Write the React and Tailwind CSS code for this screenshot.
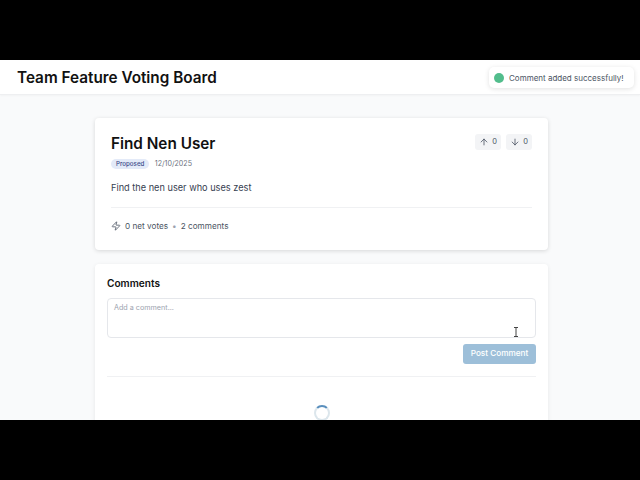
import { ArrowUp, ArrowDown, Zap } from 'lucide-react';

function VoteButton({ icon: Icon }) {
  return (
    <div className="flex h-[16px] w-[26px] items-center justify-center gap-[3px] rounded-[3px] bg-[#f3f4f6] text-[7.5px] text-[#4b5563]">
      <Icon size={10} strokeWidth={1.75} className="text-[#374151]" />
      <span>0</span>
    </div>
  );
}

export default function App() {
  return (
    <div className="flex h-[480px] w-[640px] flex-col overflow-hidden bg-black font-['Inter',sans-serif]">
      <div className="h-[60px] shrink-0" />
      <div className="relative h-[360px] shrink-0 overflow-hidden bg-[#f9fafb]">
        <header className="flex h-[35px] items-center border-b border-[#eeeff1] bg-white pt-[1px] pl-[17px] shadow-[0_1px_2px_rgba(0,0,0,0.03)]">
          <h1 className="text-[15.3px] leading-none font-semibold text-[#111111]">Team Feature Voting Board</h1>
        </header>

        <div className="absolute top-[7px] right-[6px] flex h-[21px] w-[145px] items-center gap-[5px] rounded-[5px] bg-white pl-[5px] shadow-[0_1px_5px_rgba(0,0,0,0.12)]">
          <span className="h-[10px] w-[10px] rounded-full bg-[#52bd8c]" />
          <span className="text-[8px] text-[#4b5563]">Comment added successfully!</span>
        </div>

        <main className="ml-[95px] flex w-[453px] flex-col gap-[14px] pt-[23px]">
          <section className="rounded-[4px] bg-white px-[16px] pt-[16px] pb-[18px] shadow-[0_1px_4px_rgba(0,0,0,0.14)]">
            <div className="flex items-start justify-between">
              <div>
                <h2 className="text-[15.3px] leading-[19px] font-semibold text-[#111111]">Find Nen User</h2>
                <div className="mt-[6px] flex items-center gap-[5.5px]">
                  <span className="rounded-full bg-[#e3eaf8] px-[5px] py-[1px] text-[6.2px] leading-[8px] font-medium text-[#3b4a8a]">Proposed</span>
                  <span className="text-[7.1px] text-[#6b7280]">12/10/2025</span>
                </div>
              </div>
              <div className="flex gap-[5px]">
                <VoteButton icon={ArrowUp} />
                <VoteButton icon={ArrowDown} />
              </div>
            </div>
            <p className="mt-[12px] text-[9.2px] leading-[12px] text-[#374151]">Find the nen user who uses zest</p>
            <div className="mt-[13px] flex items-center gap-[4px] border-t border-[#f0f1f3] pt-[13px] text-[8.2px] leading-[11px] text-[#4b5563]">
              <Zap size={10} strokeWidth={1.75} className="text-[#374151]" />
              <span>0 net votes</span>
              <span className="text-[#9ca3af]">•</span>
              <span>2 comments</span>
            </div>
          </section>

          <section className="rounded-[4px] bg-white px-[12px] pt-[13px] pb-[40px] shadow-[0_1px_4px_rgba(0,0,0,0.08)]">
            <h3 className="text-[10.1px] leading-[13px] font-semibold text-[#111111]">Comments</h3>
            <div className="mt-[8px] h-[40px] rounded-[4px] border border-[#e5e7eb] px-[6px] py-[4px] text-[7.2px] leading-[10px] text-[#9ca3af]">Add a comment...</div>
            <div className="mt-[6px] flex justify-end">
              <button className="h-[20px] w-[73px] rounded-[3px] bg-[#9dbfd9] text-[8.2px] font-medium text-white">Post Comment</button>
            </div>
            <div className="mt-[12px] border-t border-[#f0f1f3]" />
            <div className="mt-[28px] flex justify-center">
              <div className="h-[16px] w-[16px] rounded-full border-2 border-[#dce6ec] border-t-[#5a8fbd]" />
            </div>
          </section>
        </main>

        <svg className="absolute top-[267px] left-[513px]" width="6" height="10" viewBox="0 0 6 10" fill="none" stroke="#444" strokeWidth="1">
          <path d="M1 .5h4M1 9.5h4M3 .5v9" />
        </svg>
      </div>
      <div className="h-[60px] shrink-0" />
    </div>
  );
}
